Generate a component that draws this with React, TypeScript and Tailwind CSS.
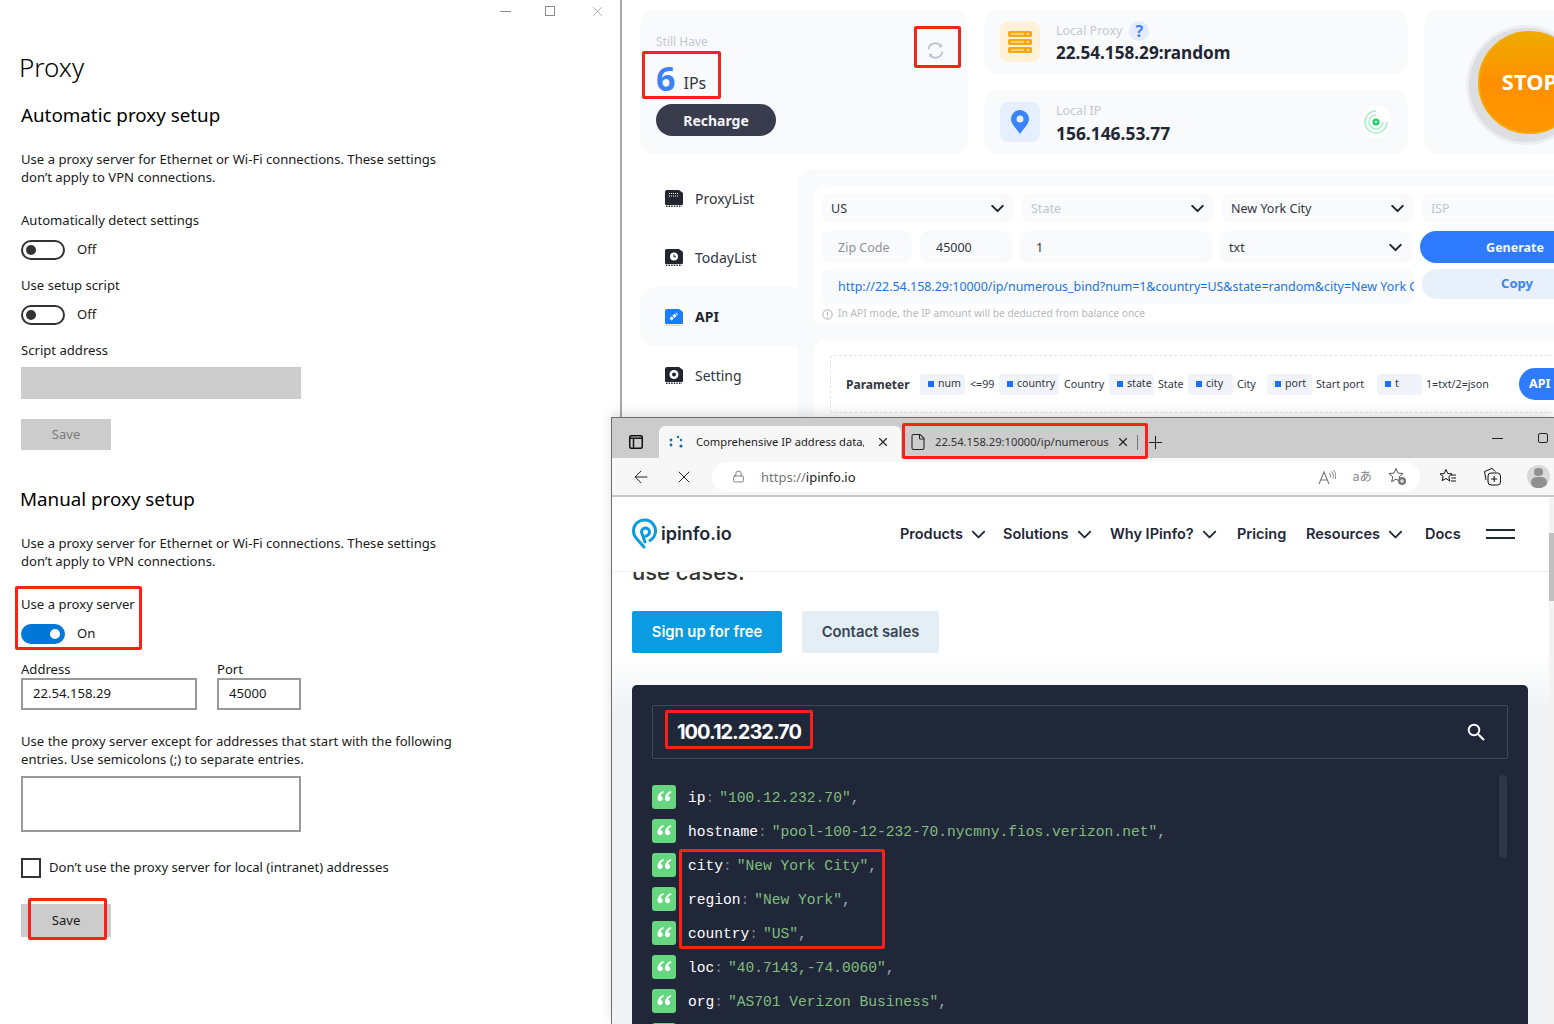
import React from "react";
import { ArrowLeft, ChevronDown, File, Lock, Plus, X } from "lucide-react";

const Toggle = ({ on }: { on?: boolean }) => (
  <div className={on ? "flex h-[20px] w-[44px] items-center justify-end rounded-full bg-[#0078d7] pr-[5px]" : "flex h-[20px] w-[44px] items-center rounded-full border-2 border-[#333] pl-[3px]"}>
    <div className={on ? "h-[10px] w-[10px] rounded-full bg-white" : "h-[10px] w-[10px] rounded-full bg-[#333]"} />
  </div>
);

const Para = ({ lines, className }: { lines: string[]; className: string }) => (
  <div className={className}>
    {lines.map((l) => (
      <div key={l} className="h-[18px] leading-[18px]">{l}</div>
    ))}
  </div>
);

const Settings = () => (
  <div className="h-[1024px] w-[622px] shrink-0 border-r-2 border-[#a8a8a8] bg-white pl-[21px] font-['Noto_Sans',sans-serif] text-[13.1px] text-[#1a1a1a]">
    <div className="flex h-[22px] items-center justify-end gap-[34px] pr-[14px] text-[#8c8c8c]">
      <div className="h-px w-[11px] bg-[#8c8c8c]" />
      <div className="h-[10px] w-[10px] border border-[#8c8c8c]" />
      <X size={17} strokeWidth={0.9} />
    </div>
    <div className="-ml-[2px] mt-[28px] h-[34px] text-[26px] font-light leading-[34px] text-black">Proxy</div>
    <div className="mt-[18px] h-[26px] text-[18.8px] leading-[26px] text-black">Automatic proxy setup</div>
    <Para className="mt-[22px]" lines={["Use a proxy server for Ethernet or Wi-Fi connections. These settings", "don’t apply to VPN connections."]} />
    <div className="mt-[25px] h-[18px] leading-[18px]">Automatically detect settings</div>
    <div className="mt-[11px] flex h-[20px] items-center gap-[12px]"><Toggle /><span>Off</span></div>
    <div className="mt-[16px] h-[18px] leading-[18px]">Use setup script</div>
    <div className="mt-[11px] flex h-[20px] items-center gap-[12px]"><Toggle /><span>Off</span></div>
    <div className="mt-[16px] h-[18px] leading-[18px]">Script address</div>
    <div className="mt-[8px] h-[32px] w-[280px] bg-[#cccccc]" />
    <div className="mt-[20px] flex h-[31px] w-[90px] items-center justify-center bg-[#cccccc] text-[#7a7a7a]">Save</div>
    <div className="-ml-[1px] mt-[36px] h-[26px] text-[18.8px] leading-[26px] text-black">Manual proxy setup</div>
    <Para className="mt-[22px]" lines={["Use a proxy server for Ethernet or Wi-Fi connections. These settings", "don’t apply to VPN connections."]} />
    <div className="mt-[25px] h-[18px] leading-[18px]">Use a proxy server</div>
    <div className="mt-[11px] flex h-[20px] items-center gap-[12px]"><Toggle on /><span>On</span></div>
    <div className="mt-[17px] flex gap-[20px]">
      <div className="w-[176px]">
        <div className="h-[17px] leading-[17px]">Address</div>
        <div className="flex h-[32px] items-center border-2 border-[#999] pl-[10px]">22.54.158.29</div>
      </div>
      <div className="w-[84px]">
        <div className="h-[17px] leading-[17px]">Port</div>
        <div className="flex h-[32px] items-center border-2 border-[#999] pl-[10px]">45000</div>
      </div>
    </div>
    <Para className="mt-[22px]" lines={["Use the proxy server except for addresses that start with the following", "entries. Use semicolons (;) to separate entries."]} />
    <div className="mt-[8px] h-[56px] w-[280px] border-2 border-[#999]" />
    <div className="mt-[26px] flex h-[20px] items-center gap-[8px]">
      <div className="h-[20px] w-[20px] border-2 border-[#333]" />
      <span>Don’t use the proxy server for local (intranet) addresses</span>
    </div>
    <div className="mt-[26px] flex h-[33px] w-[90px] items-center justify-center bg-[#cccccc]">Save</div>
  </div>
);

const Chip = ({ active, glyph }: { active?: boolean; glyph: "grid" | "clock" | "link" | "dot" }) => (
  <svg width="18" height="18" viewBox="0 0 18 18" className="shrink-0">
    <path d="M2 1h12l4 3v11a1 1 0 0 1-1 1H1a1 1 0 0 1-1-1V3a2 2 0 0 1 2-2z" fill={active ? "#1a7dff" : "#23252f"} />
    <path d="M1 17.2h16" stroke={active ? "#f2c14e" : "#23252f"} strokeWidth="1.5" strokeDasharray="1.4 1.2" />
    {glyph === "grid" && <path d="M4 4.5h10M4 7h10" stroke="#fff" strokeWidth="1" strokeDasharray="1 1" />}
    {glyph === "clock" && <><circle cx="9" cy="8.5" r="4" fill="#fff" /><path d="M9 6.5v2.3h2" stroke="#23252f" strokeWidth="1" fill="none" /></>}
    {glyph === "link" && <path d="M5.5 11.5L12 5.5" stroke="#fff" strokeWidth="3" strokeDasharray="3 1" />}
    {glyph === "dot" && <><circle cx="9" cy="8.5" r="4.5" fill="#fff" /><circle cx="9" cy="8.5" r="2" fill="#23252f" /></>}
  </svg>
);

const NavItem = ({ label, glyph, active, box }: { label: string; glyph: "grid" | "clock" | "link" | "dot"; active?: boolean; box: string }) => (
  <div className={active ? `flex ${box} items-center gap-[12px] rounded-l-[16px] bg-[#f9fafc] pl-[25px] text-[14px] font-bold text-[#23252f]` : `flex ${box} items-center gap-[12px] pl-[25px] text-[14px] text-[#33363f]`}>
    <Chip glyph={glyph} active={active} />
    <span>{label}</span>
  </div>
);

const Sel = ({ label, w, muted }: { label: string; w: string; muted?: boolean }) => (
  <div className={`flex h-[30px] ${w} shrink-0 items-center justify-between rounded-[8px] bg-[#f9fafc] pl-[9px] pr-[5px]`}>
    <span className={muted ? "pt-[2px] text-[#c1c6ce]" : "pt-[2px] text-[#33363f]"}>{label}</span>
    <ChevronDown size={21} strokeWidth={2.4} className="text-[#23252f]" />
  </div>
);

const Tag = ({ label, w }: { label: string; w: string }) => (
  <div className={`flex h-[21px] ${w} shrink-0 items-center gap-[4px] rounded-[3px] bg-[#f0f3f7] pl-[8px] text-[10.6px] text-[#33363f]`}>
    <div className="h-[6px] w-[6px] bg-[#1a6fff]" />
    <span>{label}</span>
  </div>
);

const AppPanel = () => (
  <div className="h-[417px] w-[932px] shrink-0 overflow-hidden bg-white font-['Noto_Sans',sans-serif] text-[12.5px]">
    <div className="flex gap-[16px] pl-[18px] pt-[10px]">
      <div className="h-[144px] w-[328px] shrink-0 rounded-[16px] bg-[#f9fafc] pl-[16px] pt-[23px]">
        <div className="flex items-start justify-between pr-[23px]">
          <div className="h-[17px] text-[12px] leading-[17px] text-[#c3c9d3]">Still Have</div>
          <svg width="19" height="19" viewBox="0 0 19 19" fill="none" className="mt-[8px]">
            <path d="M2.5 8.5A7 7 0 0 1 15 5M16.5 10.5A7 7 0 0 1 4 14" stroke="#bcc5d3" strokeWidth="1.9" />
            <path d="M15.8 2.5v3.7h-3.7zM3.2 16.5v-3.7h3.7z" fill="#bcc5d3" />
          </svg>
        </div>
        <div className="mt-[1px] flex h-[37px] items-end gap-[8px]">
          <span className="text-[34px] font-bold leading-[40px] text-[#3b82ff]">6</span>
          <span className="pb-[3px] text-[16px] leading-[24px] text-[#33363f]">IPs</span>
        </div>
        <div className="mt-[6px] flex h-[32px] w-[120px] items-center justify-center rounded-full bg-[#393c4c] text-[14px] font-bold text-[#f4f5f7]">Recharge</div>
      </div>
      <div className="flex w-[424px] shrink-0 flex-col gap-[16px]">
        <div className="flex h-[64px] items-center gap-[16px] rounded-[16px] bg-[#f9fafc] pl-[16px]">
          <div className="flex h-[40px] w-[40px] items-center justify-center rounded-[8px] bg-[#fff1d6]">
            <svg width="24" height="22" viewBox="0 0 24 22">
              <rect y="0" width="24" height="6" rx="1.5" fill="#fba913" /><rect y="8" width="24" height="6" rx="1.5" fill="#fba913" /><rect y="16" width="24" height="6" rx="1.5" fill="#fba913" />
              <path d="M3 3h13M3 11h13M3 19h13" stroke="#fff1d6" strokeWidth="1" /><circle cx="20" cy="3" r="1" fill="#fff1d6" /><circle cx="20" cy="11" r="1" fill="#fff1d6" /><circle cx="20" cy="19" r="1" fill="#fff1d6" />
            </svg>
          </div>
          <div className="pt-[2px]">
            <div className="flex h-[20px] items-center gap-[7px] text-[12.5px] text-[#c3c9d3]">
              <span>Local Proxy</span>
              <span className="flex h-[20px] w-[20px] items-center justify-center rounded-full bg-[#e3edff] text-[16px] font-bold text-[#3b82ff]">?</span>
            </div>
            <div className="h-[24px] text-[17.15px] font-bold leading-[24px] text-[#222633]">22.54.158.29:random</div>
          </div>
        </div>
        <div className="flex h-[64px] items-center gap-[16px] rounded-[16px] bg-[#f9fafc] pl-[16px] pr-[16px]">
          <div className="flex h-[40px] w-[40px] items-center justify-center rounded-[8px] bg-[#e6efff]">
            <svg width="18" height="24" viewBox="0 0 18 24"><path fillRule="evenodd" d="M9 24C5 18 0 14 0 9a9 9 0 0 1 18 0c0 5-5 9-9 15zM9 12.5a3.5 3.5 0 1 0 0-7 3.5 3.5 0 0 0 0 7z" fill="#3b82ff" /></svg>
          </div>
          <div className="flex-1 pt-[2px]">
            <div className="h-[20px] text-[12.5px] leading-[20px] text-[#c3c9d3]">Local IP</div>
            <div className="h-[24px] text-[17.4px] font-bold leading-[24px] text-[#222633]">156.146.53.77</div>
          </div>
          <div className="flex h-[32px] w-[32px] items-center justify-center rounded-full bg-white">
            <svg width="26" height="26" viewBox="0 0 26 26" fill="none">
              <path d="M13 2a11 11 0 1 0 11 11" stroke="#aeecc6" strokeWidth="1.5" /><path d="M13 6a7 7 0 1 0 7 7" stroke="#aeecc6" strokeWidth="1.5" />
              <circle cx="13" cy="13" r="3.5" fill="#12d463" /><circle cx="13" cy="13" r="1.2" fill="#fff" />
            </svg>
          </div>
        </div>
      </div>
      <div className="flex h-[144px] w-[200px] shrink-0 items-center rounded-[16px] bg-[#f9fafc] pl-[42px]">
        <div className="mt-[6px] flex h-[120px] w-[120px] shrink-0 items-center justify-center rounded-full bg-[#eceef1]">
          <div className="flex h-[114px] w-[114px] items-center justify-center rounded-full bg-[#dcdee1] pb-[6px] pl-[7px]">
            <div className="flex h-[103px] w-[103px] shrink-0 items-center justify-center rounded-full border-2 border-[#f5a800] bg-gradient-to-b from-[#edab00] via-[#ff8f00] to-[#ff9500] pb-[2px] text-[22px] font-bold text-white">STOP</div>
          </div>
        </div>
      </div>
    </div>
    <div className="mt-[15px] flex pl-[18px]">
      <div className="w-[158px] shrink-0 pt-[2px]">
        <NavItem label="ProxyList" glyph="grid" box="h-[58px] pb-[4px]" />
        <NavItem label="TodayList" glyph="clock" box="h-[58px] pb-[2px]" />
        <NavItem label="API" glyph="link" active box="h-[59px]" />
        <NavItem label="Setting" glyph="dot" box="h-[58px]" />
      </div>
      <div className="h-[260px] flex-1 rounded-tl-[16px] bg-[#f9fafc] pl-[16px] pt-[16px]">
        <div className="h-[139px] rounded-tl-[12px] bg-white pl-[8px] pt-[8px] text-[#33363f]">
          <div className="flex gap-[9px]">
            <Sel label="US" w="w-[191px]" />
            <Sel label="State" w="w-[191px]" muted />
            <Sel label="New York City" w="w-[191px]" />
            <div className="flex h-[30px] flex-1 items-center rounded-l-[8px] bg-[#f9fafc] pl-[9px] pt-[2px] text-[#c1c6ce]">ISP</div>
          </div>
          <div className="mt-[8px] flex gap-[8px]">
            <div className="flex h-[32px] w-[90px] items-center rounded-[8px] bg-[#f9fafc] pl-[16px] pt-[2px] text-[#8e9299]">Zip Code</div>
            <div className="flex h-[32px] w-[92px] items-center rounded-[8px] bg-[#f9fafc] pl-[16px] pt-[2px]">45000</div>
            <div className="flex h-[32px] w-[192px] items-center rounded-[8px] bg-[#f9fafc] pl-[16px] pt-[2px]">1</div>
            <div className="flex h-[32px] w-[192px] items-center justify-between rounded-[8px] bg-[#f9fafc] pl-[9px] pr-[6px]"><span className="pt-[2px]">txt</span><ChevronDown size={21} strokeWidth={2.4} className="text-[#23252f]" /></div>
            <div className="flex h-[32px] flex-1 items-center justify-center rounded-l-full bg-[#2f7bff] pl-[56px] pt-[2px] text-[12.5px] font-bold text-[#f2f6ff]">Generate</div>
          </div>
          <div className="mt-[6px] flex gap-[8px]">
            <div className="flex h-[35px] w-[592px] shrink-0 items-center overflow-hidden whitespace-nowrap rounded-[8px] bg-[#f9fafc] pl-[16px] pt-px text-[12.45px] text-[#1a73f0]">
              http://22.54.158.29:10000/ip/numerous_bind?num=1&amp;country=US&amp;state=random&amp;city=New York City
            </div>
            <div className="flex h-[30px] flex-1 items-center justify-center rounded-l-full bg-[#e8f0fc] pl-[58px] text-[13px] font-bold text-[#3b82ff]">Copy</div>
          </div>
          <div className="mt-[1px] flex h-[18px] items-center gap-[5px] text-[10.25px] text-[#b5b8be]">
            <svg width="11" height="11" viewBox="0 0 11 11" fill="none"><circle cx="5.5" cy="5.5" r="4.7" stroke="#a8abb2" /><path d="M5.5 2.8v3.4M5.5 7.4v1" stroke="#a8abb2" /></svg>
            <span>In API mode, the IP amount will be deducted from balance once</span>
          </div>
        </div>
        <div className="mt-[16px] h-[90px] rounded-tl-[12px] bg-white pl-[16px] pt-[15px]">
          <div className="flex h-[58px] items-center rounded-[4px] border border-r-0 border-dashed border-[#e3e5e8] pl-[15px] text-[10.7px] text-[#33363f]">
            <span className="w-[74px] shrink-0 pt-px text-[12px] font-bold">Parameter</span>
            <Tag label="num" w="w-[45px]" />
            <span className="ml-[5px] w-[29px] shrink-0">&lt;=99</span>
            <Tag label="country" w="w-[60px]" />
            <span className="ml-[5px] w-[45px] shrink-0">Country</span>
            <Tag label="state" w="w-[45px]" />
            <span className="ml-[4px] w-[30px] shrink-0">State</span>
            <Tag label="city" w="w-[45px]" />
            <span className="ml-[4px] w-[30px] shrink-0">City</span>
            <Tag label="port" w="w-[45px]" />
            <span className="ml-[4px] w-[61px] shrink-0">Start port</span>
            <Tag label="t" w="w-[45px]" />
            <span className="ml-[4px] w-[93px] shrink-0">1=txt/2=json</span>
            <div className="flex h-[32px] flex-1 items-center rounded-l-full bg-[#2f7bff] pl-[10px] text-[12.5px] font-bold text-white">API</div>
          </div>
        </div>
      </div>
    </div>
  </div>
);

const Quote = () => (
  <div className="flex h-[24px] w-[24px] shrink-0 items-center justify-center rounded-[3px] bg-[#67d680]">
    <svg width="15" height="14" viewBox="0 0 14 12" fill="#fff">
      <path d="M6 0.5C3 1.5 0.5 4 0.5 7.5a2.4 2.4 0 1 0 4.6-1c-.3-.8-1-1.3-1.9-1.2C3.7 3.6 4.8 2.5 6.4 1.7z" />
      <path d="M13 0.5C10 1.5 7.5 4 7.5 7.5a2.4 2.4 0 1 0 4.6-1c-.3-.8-1-1.3-1.9-1.2.5-1.7 1.6-2.8 3.2-3.6z" />
    </svg>
  </div>
);

const rows: [string, string][] = [
  ["ip", '"100.12.232.70"'],
  ["hostname", '"pool-100-12-232-70.nycmny.fios.verizon.net"'],
  ["city", '"New York City"'],
  ["region", '"New York"'],
  ["country", '"US"'],
  ["loc", '"40.7143,-74.0060"'],
  ["org", '"AS701 Verizon Business"'],
  ["postal", '"10004"'],
];

const TopNav = ({ label, chevron, w }: { label: string; chevron?: boolean; w: string }) => (
  <div className={`flex ${w} shrink-0 items-center`}>
    <span>{label}</span>
    {chevron && <ChevronDown size={23} strokeWidth={1.9} className="ml-[4px]" />}
  </div>
);

const Browser = () => (
  <div className="absolute left-[611px] top-[417px] h-[607px] w-[943px] overflow-hidden border-l border-t border-[#6f6f6f] bg-white shadow-[0_-4px_10px_rgba(0,0,0,0.12)]">
    <div className="flex h-[40px] items-end bg-[#cccccc] pl-[17px] font-['Noto_Sans',sans-serif] text-[11.2px] text-[#222]">
      <svg width="14" height="14" viewBox="0 0 14 14" fill="none" className="mb-[9px] mr-[16px] shrink-0"><rect x=".75" y=".75" width="12.5" height="12.5" rx="1.5" stroke="#111" strokeWidth="1.5" /><path d="M1 3.2h12M4.5 3v10" stroke="#111" strokeWidth="1.5" /></svg>
      <div className="flex h-[32px] w-[242px] shrink-0 items-center rounded-t-[6px] bg-[#f7f7f7] pl-[10px]">
        <svg width="18" height="14" viewBox="0 0 18 14" className="mr-[9px] shrink-0"><g fill="#1c6a9d"><circle cx="2" cy="5" r="1.4" /><circle cx="2" cy="10" r="1.4" /><circle cx="9" cy="2" r="1.2" /><circle cx="12" cy="5" r="1.2" /><circle cx="12" cy="11" r="1.6" /></g></svg>
        <span className="w-[168px] shrink-0 overflow-hidden whitespace-nowrap">Comprehensive IP address data, IP</span>
        <X size={14} strokeWidth={2} className="ml-[12px] shrink-0 text-[#222]" />
      </div>
      <div className="flex h-[32px] w-[248px] shrink-0 items-center pl-[8px]">
        <File size={18} strokeWidth={1.4} className="mr-[8px] shrink-0" />
        <span className="w-[174px] shrink-0 overflow-hidden whitespace-nowrap text-[#333]">22.54.158.29:10000/ip/numerous_bind</span>
        <X size={14} strokeWidth={2} className="ml-[7px] shrink-0" />
        <div className="ml-[7px] h-[15px] w-px shrink-0 bg-[#777]" />
        <Plus size={21} strokeWidth={1.2} className="ml-[7px] shrink-0" />
      </div>
      <div className="mb-[15px] ml-auto flex items-center gap-[35px] pr-[6px]">
        <div className="h-px w-[11px] bg-[#222]" />
        <div className="h-[10px] w-[10px] rounded-[2px] border border-[#222]" />
      </div>
    </div>
    <div className="flex h-[39px] items-center border-b-2 border-[#c8c8c8] bg-[#f7f7f7] pl-[19px] font-['Noto_Sans',sans-serif] text-[13px]">
      <ArrowLeft size={20} strokeWidth={1.2} className="shrink-0 text-[#222]" />
      <X size={20} strokeWidth={1.2} className="ml-[23px] shrink-0 text-[#222]" />
      <div className="ml-[18px] flex h-[30px] w-[708px] shrink-0 items-center rounded-full bg-white pl-[20px]">
        <Lock size={13} strokeWidth={1.3} className="text-[#555]" />
        <span className="ml-[16px] pt-[2px] text-[#777]">https://</span><span className="pt-[2px] text-[#222]">ipinfo.io</span>
        <div className="ml-auto flex items-center gap-[16px] pr-[13px] text-[#777]">
          <svg width="18" height="16" viewBox="0 0 18 16" fill="none"><path d="M1 15L6 3l5 12M3 11h6" stroke="#777" strokeWidth="1.1" /><path d="M11 4q2.5 1.5 1.5 4.5M13 2.5q3.5 2 2 7M15 1q4 3 2.2 9" stroke="#777" strokeWidth="0.9" /></svg>
          <span className="font-['Noto_Sans_CJK_JP','Noto_Sans',sans-serif] text-[12.5px] text-[#888]">aあ</span>
          <svg width="19" height="19" viewBox="0 0 19 19" fill="none"><path d="M8 1.5l2 4.6 5 .4-3.8 3.3 1.2 5-4.4-2.7-4.4 2.7 1.2-5L1 6.5l5-.4z" stroke="#555" /><circle cx="14" cy="14" r="4" fill="#777" /><path d="M12 14h4M14 12v4" stroke="#fff" /></svg>
        </div>
      </div>
      <svg width="18" height="18" viewBox="0 0 18 18" fill="none" className="ml-[19px] shrink-0"><path d="M7 1.5l1.8 4 4.2.4-3.2 2.8 1 4.3L7 10.5 3.2 12.7l1-4.3L1 5.9l4.2-.4z" stroke="#111" /><path d="M12 7h5M12.5 10h4.5M12 13h5" stroke="#111" /></svg>
      <svg width="19" height="19" viewBox="0 0 19 19" fill="none" className="ml-[26px] shrink-0"><path d="M3 13L1.5 4.5 9 1.5l3.5 3" stroke="#111" /><rect x="5" y="6" width="12.5" height="12" rx="3" stroke="#111" /><path d="M11.2 9v6M8.2 12h6" stroke="#111" /></svg>
      <div className="ml-[25px] flex h-[23px] w-[23px] shrink-0 flex-col items-center overflow-hidden rounded-full bg-[#d8d8d8] pt-[3px]">
        <div className="h-[9px] w-[9px] rounded-full bg-[#8f8f8f]" />
        <div className="mt-[1px] h-[12px] w-[16px] rounded-full bg-[#8f8f8f]" />
      </div>
    </div>
    <div className="relative h-[528px] bg-gradient-to-b from-white from-[30%] to-[#f1f3f5] to-[40%] font-['Inter',sans-serif]">
      <div className="absolute right-0 top-0 z-10 h-full w-[5px] bg-[#f3f3f3]">
        <div className="mt-[36px] h-[68px] w-[5px] bg-[#c0c0c0]" />
      </div>
      <div className="relative flex h-[75px] items-center border-b border-[#f0f0f0] bg-white pl-[20px] text-[14.5px] font-semibold text-[#1f2739]">
        <svg width="25" height="31" viewBox="0 0 25 31" fill="none" className="-mt-[2px] shrink-0">
          <path d="M12 29L5 21A11 11 0 1 1 18 22.5" stroke="#0a9be0" strokeWidth="3" strokeLinecap="round" />
          <path d="M13 24L9.5 14A4 4 0 1 1 14 18" stroke="#0a9be0" strokeWidth="3" strokeLinecap="round" />
        </svg>
        <span className="ml-[4px] w-[239px] shrink-0 -translate-y-px text-[18px] font-semibold">ipinfo.io</span>
        <TopNav label="Products" chevron w="w-[103px]" />
        <TopNav label="Solutions" chevron w="w-[107px]" />
        <TopNav label="Why IPinfo?" chevron w="w-[127px]" />
        <TopNav label="Pricing" w="w-[69px]" />
        <TopNav label="Resources" chevron w="w-[119px]" />
        <TopNav label="Docs" w="w-[61px]" />
        <div className="flex shrink-0 flex-col gap-[6px]">
          <div className="h-[2px] w-[29px] bg-[#1f2739]" />
          <div className="h-[2px] w-[29px] bg-[#1f2739]" />
        </div>
      </div>
      <div className="h-[11px] overflow-hidden bg-white pl-[20px] text-[22px] font-medium leading-[0px] text-[#333]">use cases.</div>
      <div className="mt-[28px] flex gap-[20px] pl-[20px] text-[14.8px] font-semibold">
        <div className="flex h-[42px] w-[150px] items-center justify-center rounded-[2px] bg-[#0a9be0] text-white">Sign up for free</div>
        <div className="flex h-[42px] w-[137px] items-center justify-center rounded-[2px] bg-[#e3eef5] text-[#3a4454]">Contact sales</div>
      </div>
      <div className="relative ml-[20px] mt-[32px] h-[400px] w-[896px] rounded-[5px] bg-[#1f2739] px-[20px] pt-[20px]">
        <div className="flex h-[54px] items-center justify-between rounded-[2px] border border-[#414a5a] pl-[24px] pr-[22px]">
          <span className="text-[20px] font-bold tracking-[-1px] text-white">100.12.232.70</span>
          <svg width="18" height="18" viewBox="0 0 18 18" fill="none"><circle cx="7" cy="7" r="5.3" stroke="#fff" strokeWidth="1.9" /><path d="M11 11l6 6" stroke="#fff" strokeWidth="2.2" /></svg>
        </div>
        <div className="absolute right-[21px] top-[90px] h-[83px] w-[8px] rounded-full bg-[#2d3748]" />
        <div className="mt-[26px] flex flex-col gap-[10px] font-['Liberation_Mono',monospace] text-[14.6px]">
          {rows.map(([k, v]) => (
            <div key={k} className="flex h-[24px] items-center">
              <Quote />
              <div className="flex pt-[4px]">
                <span className="ml-[12px] text-white">{k}</span>
                <span className="text-[#77808c]">:</span>
                <span className="ml-[5px] text-[#83bd7e]">{v}</span>
                <span className="text-[#a0a8b3]">,</span>
              </div>
            </div>
          ))}
        </div>
      </div>
    </div>
  </div>
);

const Mark = ({ className }: { className: string }) => (
  <div className={`absolute rounded-[2px] border-[3px] border-[#fb2118] ${className}`} />
);

export default function App() {
  return (
    <div className="relative flex h-[1024px] w-[1554px] overflow-hidden bg-white">
      <Settings />
      <AppPanel />
      <Browser />
      <Mark className="left-[642px] top-[51px] h-[48px] w-[79px]" />
      <Mark className="left-[914px] top-[26px] h-[42px] w-[47px]" />
      <Mark className="left-[902px] top-[423px] h-[36px] w-[246px]" />
      <Mark className="left-[665px] top-[710px] h-[39px] w-[148px]" />
      <Mark className="left-[679px] top-[849px] h-[100px] w-[206px]" />
      <Mark className="left-[15px] top-[586px] h-[64px] w-[127px]" />
      <Mark className="left-[28px] top-[898px] h-[42px] w-[79px]" />
    </div>
  );
}
